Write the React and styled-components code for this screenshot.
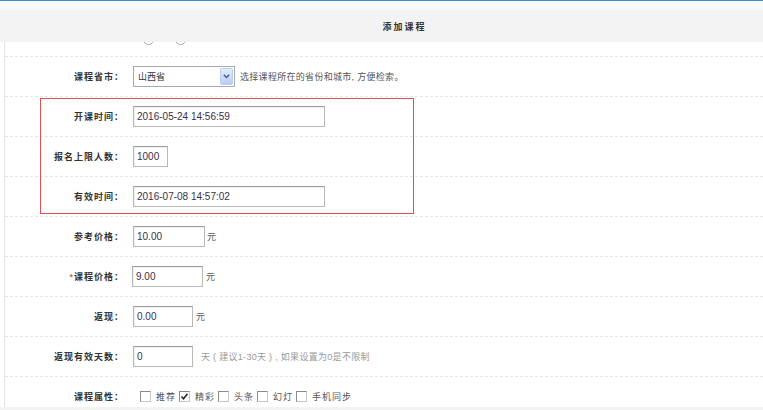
import React from 'react'
import styled, { createGlobalStyle } from 'styled-components'

const GlobalStyle = createGlobalStyle`
  html, body {
    margin: 0;
    padding: 0;
    background: #fff;
  }
  body {
    font-family: 'Liberation Sans', 'Noto Sans CJK SC', sans-serif;
    color: #333;
  }
`

const Page = styled.div`
  width: 763px;
  height: 410px;
  display: flex;
  flex-direction: column;
  overflow: hidden;
  border-top: 1px solid #3b8fc6;
  box-sizing: border-box;
`

const TopBand = styled.div`
  height: 9px;
  background: #f9f9f9;
  flex-shrink: 0;
`

const Header = styled.div`
  height: 32px;
  flex-shrink: 0;
  background: #f3f3f3;
  display: flex;
  align-items: center;
  justify-content: center;
  padding-left: 46px;
  font-size: 9px;
  font-weight: bold;
  letter-spacing: 2px;
  color: #333;
`

const Body = styled.div`
  position: relative;
  flex: 1;
  overflow: hidden;
  margin-left: 4px;
  border-left: 1px solid #e4e4e4;
`

const Row = styled.div`
  display: flex;
  align-items: center;
  height: 39px;
  border-bottom: 1px dashed #e6e6e6;
  margin-top: ${p => (p.$shift ? `-${p.$shift}px` : '0')};
`

const Label = styled.div`
  width: 119px;
  flex-shrink: 0;
  text-align: right;
  font-size: 9px;
  font-weight: bold;
  letter-spacing: 1px;
  color: #333;
  white-space: nowrap;
`

const Star = styled.span`
  color: #e02020;
  font-weight: normal;
`

const Field = styled.div`
  display: flex;
  align-items: center;
  margin-left: ${p => p.$offset ?? 9}px;
`

const Input = styled.div`
  box-sizing: border-box;
  width: ${p => p.$w}px;
  height: 21px;
  border: 1px solid #b8b8b8;
  border-top-color: #9d9d9d;
  box-shadow: inset 1px 1px 0 #f0f0f0;
  background: #fff;
  display: flex;
  align-items: center;
  padding-left: 3px;
  font-family: 'Liberation Sans', Arial, sans-serif;
  font-size: 10px;
  color: #3a2f4a;
`

const Unit = styled.span`
  margin-left: ${p => p.$gap ?? 2}px;
  font-size: 9px;
  letter-spacing: 0.3px;
  color: ${p => p.$muted ? '#9a9a9a' : '#555'};
  white-space: nowrap;
`

const Select = styled.div`
  box-sizing: border-box;
  width: 102px;
  height: 21px;
  border: 1px solid #a5acb2;
  background: #fff;
  display: flex;
  align-items: center;
  justify-content: space-between;
  padding: 1px 1px 1px 4px;
  font-size: 9px;
  color: #333;
`

const SelectArrow = styled.span`
  box-sizing: border-box;
  width: 13px;
  height: 17px;
  border: 1px solid #bccdf7;
  border-radius: 2px;
  background: linear-gradient(#e3ecfd, #b9cdf4);
  display: flex;
  align-items: center;
  justify-content: center;
`

const Radio = styled.span`
  box-sizing: border-box;
  width: 11px;
  height: 11px;
  border-radius: 50%;
  border: 1px solid #a9a9a9;
  background: #fff;
  margin-top: 5px;
  margin-right: 21px;
`

const Checks = styled.div`
  display: flex;
  align-items: center;
  padding-left: 7px;
`

const CheckItem = styled.label`
  display: flex;
  align-items: center;
  margin-right: 3px;
  font-size: 9px;
  letter-spacing: 1px;
  color: #555;
`

const Box = styled.span`
  box-sizing: border-box;
  width: 11px;
  height: 11px;
  border: 1px solid #8a8a8a;
  border-right-color: #c8c8c8;
  border-bottom-color: #c8c8c8;
  background: #fff;
  margin-right: 5px;
  display: flex;
  align-items: center;
  justify-content: center;
`

const Highlight = styled.div`
  position: absolute;
  left: 35px;
  top: 56px;
  width: 374px;
  height: 116px;
  box-sizing: border-box;
  border: 1px solid #dc5252;
  pointer-events: none;
`

const Footer = styled.div`
  height: 3px;
  flex-shrink: 0;
  background: #f3f3f3;
`

const Chevron = () => (
  <svg width='7' height='5' viewBox='0 0 7 5'>
    <path d='M0.8 0.8 L3.5 3.5 L6.2 0.8' fill='none' stroke='#4a5d86' strokeWidth='1.4' />
  </svg>
)

const Tick = () => (
  <svg width='9' height='9' viewBox='0 0 9 9'>
    <path d='M1.5 4.5 L3.5 6.8 L7.5 1.8' fill='none' stroke='#222' strokeWidth='1.5' />
  </svg>
)

const attrs = [
  { name: '推荐', checked: false },
  { name: '精彩', checked: true },
  { name: '头条', checked: false },
  { name: '幻灯', checked: false },
  { name: '手机同步', checked: false }
]

const App = () => (
  <>
    <GlobalStyle />
    <Page>
      <TopBand />
      <Header>添加课程</Header>
      <Body>
        <Row $shift={25}>
          <Label />
          <Field $offset={19}>
            <Radio />
            <Radio />
          </Field>
        </Row>
        <Row>
          <Label>课程省市：</Label>
          <Field>
            <Select>
              山西省
              <SelectArrow>
                <Chevron />
              </SelectArrow>
            </Select>
            <Unit $gap={5}>选择课程所在的省份和城市, 方便检索。</Unit>
          </Field>
        </Row>
        <Row>
          <Label>开课时间：</Label>
          <Field>
            <Input $w={192}>2016-05-24 14:56:59</Input>
          </Field>
        </Row>
        <Row>
          <Label>报名上限人数：</Label>
          <Field>
            <Input $w={35}>1000</Input>
          </Field>
        </Row>
        <Row>
          <Label>有效时间：</Label>
          <Field>
            <Input $w={192}>2016-07-08 14:57:02</Input>
          </Field>
        </Row>
        <Row>
          <Label>参考价格：</Label>
          <Field>
            <Input $w={72}>10.00</Input>
            <Unit>元</Unit>
          </Field>
        </Row>
        <Row>
          <Label>
            <Star>*</Star>课程价格：
          </Label>
          <Field $offset={8}>
            <Input $w={71}>9.00</Input>
            <Unit $gap={3}>元</Unit>
          </Field>
        </Row>
        <Row>
          <Label>返现：</Label>
          <Field>
            <Input $w={60}>0.00</Input>
            <Unit $gap={3}>元</Unit>
          </Field>
        </Row>
        <Row>
          <Label>返现有效天数：</Label>
          <Field>
            <Input $w={60}>0</Input>
            <Unit $gap={8} $muted>天 ( 建议1-30天 ) , 如果设置为0是不限制</Unit>
          </Field>
        </Row>
        <Row>
          <Label>课程属性：</Label>
          <Field>
            <Checks>
              {attrs.map(a => (
                <CheckItem key={a.name}>
                  <Box>{a.checked && <Tick />}</Box>
                  {a.name}
                </CheckItem>
              ))}
            </Checks>
          </Field>
        </Row>
        <Highlight />
      </Body>
      <Footer />
    </Page>
  </>
)

export default App
